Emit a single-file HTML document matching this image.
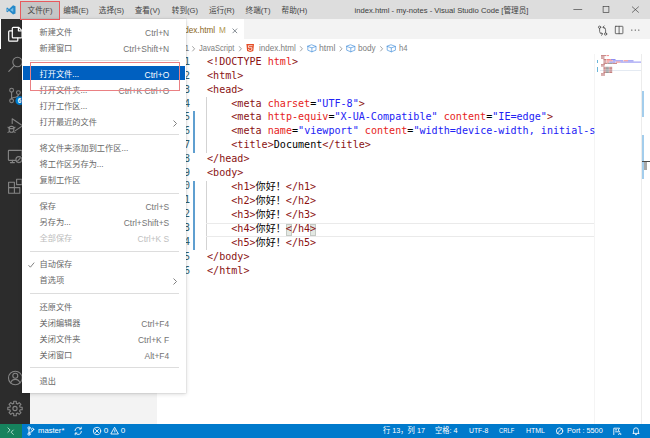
<!DOCTYPE html>
<html lang="zh-CN">
<head>
<meta charset="utf-8">
<title>index.html - my-notes - Visual Studio Code</title>
<style>
*{box-sizing:border-box;margin:0;padding:0}
html,body{width:650px;height:438px;overflow:hidden;background:#fff}
body{position:relative;font-family:"Liberation Sans","Noto Sans CJK SC",sans-serif;font-size:8.2px;color:#333;-webkit-font-smoothing:antialiased}
.abs{position:absolute}
/* title bar */
#titlebar{left:0;top:0;width:650px;height:18.5px;background:#dddddd}
.tm{position:absolute;top:1px;height:19px;line-height:19px;white-space:nowrap;color:#444;font-size:7.6px}
#filebtn{left:21px;top:1px;width:38px;height:18px;background:#c6c6c6}
#redbtn{z-index:12;left:20px;top:1px;width:40px;height:19px;border:1px solid #e8595d}
#title{left:341.5px;top:1px;width:200px;height:19px;line-height:19px;text-align:center;white-space:nowrap;font-size:7.65px;color:#3c3c3c}
/* activity bar */
#activity{left:0;top:18.5px;width:30px;height:405.5px;background:#2c2c2c}
#actind{left:0;top:19px;width:1px;height:30px;background:#fff}
/* sidebar */
#sidebar{left:30px;top:18.5px;width:127px;height:405.5px;background:#f3f3f3}
/* editor */
#tabs{left:157px;top:18.5px;width:493px;height:21px;background:#f3f3f3}
#tab{left:157px;top:18.5px;width:86.7px;height:21px;background:#fff}
#crumbs{left:157px;top:39px;width:493px;height:15px;background:#fff;color:#808080;font-size:8px}
.bc{position:absolute;top:0;height:15px;line-height:19px;white-space:nowrap;font-size:8.5px;transform-origin:0 50%}
#code{z-index:2;left:157px;top:54.5px;width:438.6px;height:370px;font-family:"DejaVu Sans Mono","Liberation Mono","Noto Sans CJK SC",monospace;font-size:10.08px;overflow:hidden}
.ln{position:absolute;left:0;height:14px;line-height:14px;width:438px;white-space:pre}
.ln .n{position:absolute;left:0;width:33px;text-align:right;color:#2f5f70}
.ln .c{position:absolute;left:50px;color:#000}
.t{color:#8a1212}.a{color:#e62222}.s{color:#2222f5}
.cj{font-family:"Noto Sans CJK SC",sans-serif}
/* status */
#status{left:0;top:424px;width:650px;height:14px;background:#007acc;color:#fff;font-size:7.6px}
#remote{left:0;top:424px;width:22px;height:14px;background:#16825d}
.st{position:absolute;top:424px;height:14px;line-height:14px;color:#fff;white-space:nowrap;font-size:8.1px;transform-origin:0 50%}
/* menu */
#menu{z-index:10;left:22px;top:19px;width:164px;height:374px;background:#fff;box-shadow:0 0 0 .6px rgba(0,0,0,.07),0 1px 4px rgba(0,0,0,.17);padding-top:5.7px;color:#686868}
.mi{position:relative;height:16px;line-height:16px;white-space:nowrap}
.mi .l{position:absolute;left:17.5px;top:0}
.mi .k{position:absolute;right:16.8px;top:0;font-size:8.45px;color:#747474}
.mi.sel .k{color:#fff}.mi.dis .k{color:#c0c0c0}
.mi.dis{color:#bcbcbc}
.sep{height:10.2px;position:relative}
.sep:after{content:"";position:absolute;left:8px;right:7px;top:3.6px;height:1px;background:#dddddd}
.mi.sel{color:#fff}
.mi.sel:before{content:"";position:absolute;left:1px;right:1.2px;top:-.7px;height:14px;background:#0060c0}
#redrect{z-index:11;left:30px;top:62px;width:150px;height:29px;border:1px solid #ea8083}
svg{position:absolute;overflow:visible}
</style>
</head>
<body>
<!-- TITLE BAR -->
<div id="titlebar" class="abs"></div>
<div id="filebtn" class="abs"></div>
<svg style="left:6.3px;top:4.5px" width="10" height="9.8" viewBox="0 0 100 100"><path d="M72 30L44 50L72 70Z" fill="#6cc0f2"/><path d="M71 2L96 13V87L71 98L30 60L12 74L4 69V31L12 26L30 40ZM72 30L44 50L72 70ZM13 40V60L24 50Z" fill="#2489ca" fill-rule="evenodd"/></svg>
<div class="tm" style="left:27.6px">文件(F)</div>
<div class="tm" style="left:63.2px">编辑(E)</div>
<div class="tm" style="left:98.8px">选择(S)</div>
<div class="tm" style="left:134.7px">查看(V)</div>
<div class="tm" style="left:171.8px">转到(G)</div>
<div class="tm" style="left:208.9px">运行(R)</div>
<div class="tm" style="left:245.6px">终端(T)</div>
<div class="tm" style="left:281.6px">帮助(H)</div>
<div id="title" class="abs">index.html - my-notes - Visual Studio Code [管理员]</div>
<svg style="left:570px;top:0" width="80" height="19" viewBox="0 0 80 19"><g stroke="#3a3a3a" stroke-width="0.65" fill="none"><path d="M3.4 9.5H12.2"/><rect x="33.1" y="6.6" width="5.8" height="5.8"/><path d="M62 6.6L68.8 12.6M68.8 6.6L62 12.6"/></g></svg>
<div id="redbtn" class="abs"></div>

<!-- ACTIVITY BAR -->
<div id="activity" class="abs"></div>
<div id="actind" class="abs"></div>


<svg style="left:0;top:19px" width="30" height="405" viewBox="0 19 30 405" fill="none" stroke-linejoin="round" stroke-linecap="round">
 <!-- files (active) -->
 <g stroke="#fff" stroke-width="1.2">
  <path d="M12.3 37V28.2Q12.3 27.3 13.2 27.3H18.6L22 30.6V37Q22 37.9 21.1 37.9H13.2Q12.3 37.9 12.3 37Z"/>
  <path d="M18.4 27.5V30.8H21.8"/>
  <path d="M12.3 30.9H9.6Q8.7 30.9 8.7 31.8V40.3Q8.7 41.2 9.6 41.2H16.9Q17.8 41.2 17.8 40.3V38"/>
 </g>
 <g stroke="#858585" stroke-width="1.1">
  <!-- search -->
  <circle cx="17.5" cy="62" r="4.7"/>
  <path d="M14.3 65.6L8.8 71.4"/>
  <!-- scm -->
  <circle cx="11.6" cy="90.2" r="1.9"/>
  <circle cx="11.6" cy="100.8" r="1.9"/>
  <circle cx="18.4" cy="92.6" r="1.9"/>
  <path d="M11.6 92.2V98.8M18.4 94.6Q18.4 97 15.5 97.2Q11.8 97.4 11.6 98.8"/>
  <!-- debug -->
  <path d="M12.2 123.4V118.8L22.6 125.8L15.4 130.6"/>
  <rect x="9.2" y="126.4" width="4.6" height="5.8" rx="2"/>
  <path d="M9.2 128.6H13.8M8 127.2l1.2.8M15 127.2l-1.2.8M8 132.4l1.2-.8M15 132.4l-1.2-.8"/>
  <!-- remote explorer -->
  <path d="M15.6 160.4H9Q8.4 160.4 8.4 159.8V151Q8.4 150.4 9 150.4H21.4Q22 150.4 22 151V155.4"/>
  <path d="M10.4 162.6H14.4M12.4 160.4V162.6"/>
  <circle cx="18.9" cy="159.6" r="3"/>
  <path d="M17.7 160.8L20.1 158.4"/>
  <!-- extensions -->
  <path d="M8.6 182.2H14.4V193.2H8.6ZM8.6 187.6H19.8V193.2H14.4"/>
  <rect x="16.6" y="179.2" width="5.4" height="5.4"/>
  <!-- account -->
  <circle cx="15.3" cy="378" r="6.8"/>
  <circle cx="15.3" cy="375.8" r="2.5"/>
  <path d="M10.7 382.8Q11.7 379.4 15.3 379.4Q18.9 379.4 19.9 382.8"/>
  <!-- gear -->
  <circle cx="15" cy="408.5" r="2.1"/>
  <path d="M13.74 401.31L16.26 401.31L16.32 403.37L17.70 403.94L19.20 402.53L20.97 404.30L19.56 405.80L20.13 407.18L22.19 407.24L22.19 409.76L20.13 409.82L19.56 411.20L20.97 412.70L19.20 414.47L17.70 413.06L16.32 413.63L16.26 415.69L13.74 415.69L13.68 413.63L12.30 413.06L10.80 414.47L9.03 412.70L10.44 411.20L9.87 409.82L7.81 409.76L7.81 407.24L9.87 407.18L10.44 405.80L9.03 404.30L10.80 402.53L12.30 403.94L13.68 403.37Z"/>
 </g>
 <circle cx="19.8" cy="100.7" r="4.4" fill="#007acc"/>
</svg>
<div class="abs" style="left:17.8px;top:96.2px;font-size:6.5px;font-weight:bold;color:#fff;line-height:9px">6</div>

<!-- SIDEBAR -->
<div id="sidebar" class="abs"></div>

<!-- EDITOR -->
<div id="tabs" class="abs"></div>
<div id="tab" class="abs"></div>
<div class="abs" style="left:177.8px;top:19px;height:20px;line-height:23px;font-size:8.2px;color:#8a661c;white-space:nowrap">index.html</div>
<div class="abs" style="left:219px;top:19px;height:20px;line-height:23px;font-size:8.2px;color:#b09650">M</div>
<svg style="left:232px;top:27.8px" width="5.7" height="5.7" viewBox="0 0 8 8"><path d="M.8 .8L7.2 7.2M7.2 .8L.8 7.2" stroke="#56606a" stroke-width="1" fill="none"/></svg>
<div id="crumbs" class="abs">
 <span class="bc" style="left:27.6px">1</span><span class="bc" style="left:42px;transform:scaleX(.89)">JavaScript</span>
 <span class="bc" style="left:102.4px;transform:scaleX(.951)">index.html</span>
 <span class="bc" style="left:161.7px;transform:scaleX(1.02)">html</span>
 <span class="bc" style="left:201px;transform:scaleX(.957)">body</span>
 <span class="bc" style="left:241.7px;transform:scaleX(.9)">h4</span>
</div>


<svg style="left:157px;top:39px" width="493" height="15" viewBox="157 39 493 15" fill="none" stroke="#8a8a8a" stroke-width="0.8" stroke-linecap="round" stroke-linejoin="round">
 <path d="M192.6 46.6L194.6 48.8L192.6 51M239.4 46.6L241.4 48.8L239.4 51M300.4 46.6L302.4 48.8L300.4 51M340 46.6L342 48.8L340 51M380.6 46.6L382.6 48.8L380.6 51"/>
 <g stroke="#4a94dc" stroke-width="0.7">
  <path d="M311.9 44.9L316.0 46.4L311.9 47.9L307.8 46.4ZM307.8 46.4V50.2L311.9 51.8L316.0 50.2V46.4M311.9 47.9V51.8"/>
  <path d="M350.8 44.9L354.9 46.4L350.8 47.9L346.7 46.4ZM346.7 46.4V50.2L350.8 51.8L354.9 50.2V46.4M350.8 47.9V51.8"/>
  <path d="M391.3 44.9L395.4 46.4L391.3 47.9L387.2 46.4ZM387.2 46.4V50.2L391.3 51.8L395.4 50.2V46.4M391.3 47.9V51.8"/>
 </g>
 <path d="M246.4 44H254L253.3 51L250.2 52.1L247.1 51Z" fill="#e44d26" stroke="none"/>
 <path d="M252.2 45.7H248.4L248.6 47.7H252L251.7 50.1L250.2 50.6L248.7 50.1L248.6 49.4" stroke="#fff" stroke-width="0.75" fill="none"/>
</svg>
<svg style="left:590px;top:19px" width="60" height="20" viewBox="590 19 60 20" fill="none" stroke="#4a4a4a" stroke-width="0.8" stroke-linecap="round" stroke-linejoin="round">
 <circle cx="599.6" cy="27.2" r="1.15"/><circle cx="605.6" cy="34" r="1.15"/>
 <path d="M599.6 28.4V31.4Q599.6 34 602.2 34M605.6 32.8V29.8Q605.6 27.2 603.2 27.2"/>
 <path d="M601.4 32.7L602.7 34L601.4 35.3M604.2 25.9L602.9 27.2L604.2 28.5"/>
 <rect x="615.3" y="26.3" width="7.6" height="7.4" rx="0.5"/><path d="M619.1 26.3V33.7"/>
 <g fill="#4a4a4a" stroke="none"><circle cx="631.8" cy="30.1" r="0.7"/><circle cx="635.3" cy="30.1" r="0.7"/><circle cx="638.8" cy="30.1" r="0.7"/></g>
</svg>

<div id="code" class="abs">
<div class="ln" style="top:0px"><span class="n">1</span><span class="c"><span class="t">&lt;!DOCTYPE</span> <span class="a">html</span><span class="t">&gt;</span></span></div>
<div class="ln" style="top:14px"><span class="n">2</span><span class="c"><span class="t">&lt;html&gt;</span></span></div>
<div class="ln" style="top:28px"><span class="n">3</span><span class="c"><span class="t">&lt;head&gt;</span></span></div>
<div class="ln" style="top:42px"><span class="n">4</span><span class="c">    <span class="t">&lt;meta</span> <span class="a">charset</span>=<span class="s">"UTF-8"</span><span class="t">&gt;</span></span></div>
<div class="ln" style="top:55px"><span class="n">5</span><span class="c">    <span class="t">&lt;meta</span> <span class="a">http-equiv</span>=<span class="s">"X-UA-Compatible"</span> <span class="a">content</span>=<span class="s">"IE=edge"</span><span class="t">&gt;</span></span></div>
<div class="ln" style="top:69px"><span class="n">6</span><span class="c">    <span class="t">&lt;meta</span> <span class="a">name</span>=<span class="s">"viewport"</span> <span class="a">content</span>=<span class="s">"width=device-width, initial-scale=1.0"</span><span class="t">&gt;</span></span></div>
<div class="ln" style="top:83px"><span class="n">7</span><span class="c">    <span class="t">&lt;title&gt;</span>Document<span class="t">&lt;/title&gt;</span></span></div>
<div class="ln" style="top:97px"><span class="n">8</span><span class="c"><span class="t">&lt;/head&gt;</span></span></div>
<div class="ln" style="top:111px"><span class="n">9</span><span class="c"><span class="t">&lt;body&gt;</span></span></div>
<div class="ln" style="top:124px"><span class="n">10</span><span class="c">    <span class="t">&lt;h1&gt;</span><span class="cj">你好！</span><span class="t">&lt;/h1&gt;</span></span></div>
<div class="ln" style="top:138px"><span class="n">11</span><span class="c">    <span class="t">&lt;h2&gt;</span><span class="cj">你好！</span><span class="t">&lt;/h2&gt;</span></span></div>
<div class="ln" style="top:152px"><span class="n">12</span><span class="c">    <span class="t">&lt;h3&gt;</span><span class="cj">你好！</span><span class="t">&lt;/h3&gt;</span></span></div>
<div class="ln" style="top:166px"><span class="n">13</span><span class="c">    <span class="t">&lt;h4&gt;</span><span class="cj">你好！</span><span class="t">&lt;/h4&gt;</span></span></div>
<div class="ln" style="top:180px"><span class="n">14</span><span class="c">    <span class="t">&lt;h5&gt;</span><span class="cj">你好！</span><span class="t">&lt;/h5&gt;</span></span></div>
<div class="ln" style="top:195px"><span class="n">15</span><span class="c"><span class="t">&lt;/body&gt;</span></span></div>
<div class="ln" style="top:209px"><span class="n">16</span><span class="c"><span class="t">&lt;/html&gt;</span></span></div>
</div>


<!-- editor decorations -->
<div class="abs" style="left:193px;top:111px;width:1.5px;height:42px;background:#5f9fd0"></div>
<div class="abs" style="left:193px;top:180.8px;width:1.5px;height:69.5px;background:#5f9fd0"></div>
<div class="abs" style="left:206px;top:97.3px;width:1px;height:55.7px;background:#d3d3d3"></div>
<div class="abs" style="left:206px;top:180.8px;width:1px;height:69.5px;background:#d3d3d3"></div>
<div class="abs" style="left:206px;top:222.5px;width:389px;height:14px;border-top:1px solid #eaeaea;border-bottom:1px solid #eaeaea"></div>
<div class="abs" style="left:285.5px;top:223.5px;width:6px;height:12px;background:#e3e8e3;border:.5px solid #c4c9c4"></div>
<div class="abs" style="left:310px;top:223.5px;width:6px;height:12px;background:#e3e8e3;border:.5px solid #c4c9c4"></div>
<!-- minimap -->
<div class="abs" style="left:594px;top:54px;width:1px;height:370px;background:#f4f4f4"></div>
<div class="abs" style="left:640.5px;top:54px;width:1px;height:370px;background:#ececec"></div>
<div class="abs" style="left:596.5px;top:59.8px;width:1.2px;height:3.6px;background:#6bb5d8"></div>
<div class="abs" style="left:596.5px;top:66.8px;width:1.2px;height:5.6px;background:#6bb5d8"></div>
<div class="abs" style="left:600px;top:69.6px;width:40.5px;height:1.6px;background:#e4eaf2"></div>
<svg style="left:600.5px;top:54.5px" width="40" height="21" viewBox="0 0 40 20.8" id="mm"><rect x="0.0" y="0.00" width="5.0" height="1" fill="#a03030" opacity="0.62"/><rect x="5.5" y="0.00" width="2.5" height="1" fill="#e84040" opacity="0.62"/><rect x="0.0" y="1.30" width="3.5" height="1" fill="#a03030" opacity="0.62"/><rect x="0.0" y="2.60" width="3.5" height="1" fill="#a03030" opacity="0.62"/><rect x="2.4" y="3.90" width="3.0" height="1" fill="#a03030" opacity="0.62"/><rect x="5.8" y="3.90" width="4.0" height="1" fill="#e84040" opacity="0.62"/><rect x="10.0" y="3.90" width="4.5" height="1" fill="#4848e8" opacity="0.62"/><rect x="2.4" y="5.20" width="3.0" height="1" fill="#a03030" opacity="0.62"/><rect x="5.8" y="5.20" width="6.0" height="1" fill="#e84040" opacity="0.62"/><rect x="12.0" y="5.20" width="10.0" height="1" fill="#4848e8" opacity="0.62"/><rect x="22.5" y="5.20" width="4.5" height="1" fill="#e84040" opacity="0.62"/><rect x="27.0" y="5.20" width="5.5" height="1" fill="#4848e8" opacity="0.62"/><rect x="2.4" y="6.50" width="3.0" height="1" fill="#a03030" opacity="0.62"/><rect x="5.8" y="6.50" width="2.5" height="1" fill="#e84040" opacity="0.62"/><rect x="8.5" y="6.50" width="6.0" height="1" fill="#4848e8" opacity="0.62"/><rect x="15.0" y="6.50" width="4.5" height="1" fill="#e84040" opacity="0.62"/><rect x="19.5" y="6.50" width="20.5" height="1" fill="#4848e8" opacity="0.62"/><rect x="2.4" y="7.80" width="4.0" height="1" fill="#a03030" opacity="0.62"/><rect x="6.5" y="7.80" width="5.0" height="1" fill="#555" opacity="0.62"/><rect x="11.5" y="7.80" width="4.5" height="1" fill="#a03030" opacity="0.62"/><rect x="0.0" y="9.10" width="4.0" height="1" fill="#a03030" opacity="0.62"/><rect x="0.0" y="10.40" width="3.5" height="1" fill="#a03030" opacity="0.62"/><rect x="2.4" y="11.70" width="2.4" height="1" fill="#a03030" opacity="0.62"/><rect x="4.9" y="11.70" width="3.0" height="1" fill="#555" opacity="0.62"/><rect x="8.2" y="11.70" width="3.0" height="1" fill="#a03030" opacity="0.62"/><rect x="2.4" y="13.00" width="2.4" height="1" fill="#a03030" opacity="0.62"/><rect x="4.9" y="13.00" width="3.0" height="1" fill="#555" opacity="0.62"/><rect x="8.2" y="13.00" width="3.0" height="1" fill="#a03030" opacity="0.62"/><rect x="2.4" y="14.30" width="2.4" height="1" fill="#a03030" opacity="0.62"/><rect x="4.9" y="14.30" width="3.0" height="1" fill="#555" opacity="0.62"/><rect x="8.2" y="14.30" width="3.0" height="1" fill="#a03030" opacity="0.62"/><rect x="2.4" y="15.60" width="2.4" height="1" fill="#a03030" opacity="0.62"/><rect x="4.9" y="15.60" width="3.0" height="1" fill="#555" opacity="0.62"/><rect x="8.2" y="15.60" width="3.0" height="1" fill="#a03030" opacity="0.62"/><rect x="2.4" y="16.90" width="2.4" height="1" fill="#a03030" opacity="0.62"/><rect x="4.9" y="16.90" width="3.0" height="1" fill="#555" opacity="0.62"/><rect x="8.2" y="16.90" width="3.0" height="1" fill="#a03030" opacity="0.62"/><rect x="0.0" y="18.20" width="4.0" height="1" fill="#a03030" opacity="0.62"/><rect x="0.0" y="19.50" width="4.0" height="1" fill="#a03030" opacity="0.62"/></svg>
<!-- overview ruler -->
<div class="abs" style="left:641.8px;top:90.5px;width:2.2px;height:26px;background:#a3cdec"></div>
<div class="abs" style="left:641.8px;top:135px;width:2.2px;height:44px;background:#a3cdec"></div>
<div class="abs" style="left:644.2px;top:162.4px;width:3.2px;height:7.6px;background:#a8a8a8"></div>
<div class="abs" style="left:641.6px;top:160.8px;width:8.4px;height:1.2px;background:#4a4a4a"></div>

<!-- STATUS BAR -->
<div id="status" class="abs"></div>
<div id="remote" class="abs"></div>
<div class="st" style="left:37.6px;transform:scaleX(0.946)">master*</div>
<div class="st" style="left:103.8px">0</div>
<div class="st" style="left:120.8px">0</div>
<div class="st" style="left:382.5px;transform:scaleX(0.897)">行 13，列 17</div>
<div class="st" style="left:435.3px;transform:scaleX(0.897)">空格: 4</div>
<div class="st" style="left:468.7px;transform:scaleX(0.843)">UTF-8</div>
<div class="st" style="left:499.4px;transform:scaleX(0.72)">CRLF</div>
<div class="st" style="left:525.7px;transform:scaleX(0.859)">HTML</div>
<div class="st" style="left:566.8px;transform:scaleX(0.902)">Port : 5500</div>


<svg style="left:0;top:424px" width="650" height="14" viewBox="0 424 650 14" fill="none" stroke="#fff" stroke-width="0.85" stroke-linecap="round" stroke-linejoin="round">
 <!-- remote -->
 <path d="M7.9 427.9L10.1 430.1L7.9 432.3M13.3 430L11.1 432.2L13.3 434.4" stroke-width="0.8" stroke="#d4f5e6"/>
 <!-- branch -->
 <circle cx="29" cy="427.9" r="1.15"/><circle cx="29" cy="434.1" r="1.15"/><circle cx="32.6" cy="429.4" r="1.15"/>
 <path d="M29 429.1V432.9M32.6 430.6Q32.6 432 30.8 432.1Q29.2 432.2 29 432.9"/>
 <!-- sync -->
 <path d="M75 430.6A3.2 3.2 0 0 1 80.6 428.6M81.4 431.4A3.2 3.2 0 0 1 75.8 433.4"/>
 <path d="M81.2 427.2V429H79.4M75.2 434.8V433H77"/>
 <!-- error -->
 <circle cx="97" cy="431" r="3.7"/><path d="M95.4 429.4L98.6 432.6M98.6 429.4L95.4 432.6"/>
 <!-- warning -->
 <path d="M114.8 427.6L118.4 434H111.2Z"/><path d="M114.8 429.8V432"/>
 <!-- port -->
 <circle cx="559.6" cy="431" r="3.2"/><path d="M557.4 433.2L561.8 428.8"/>
 <!-- feedback -->
 <path d="M613.8 434.6V428.2H619.6L618.2 430L619.6 431.8H615.6"/><circle cx="616" cy="429.9" r="0.2"/>
 <path d="M618.6 434.6Q618.6 433 620.2 433Q620.8 433 620.8 434.6"/>
 <!-- bell -->
 <path d="M633 433.4H639M633.6 433.4V430.4Q633.6 427.8 636 427.8Q638.4 427.8 638.4 430.4V433.4M635.4 434.6H636.6"/>
</svg>

<!-- MENU -->
<div id="menu" class="abs">
 <div class="mi"><span class="l">新建文件</span><span class="k">Ctrl+N</span></div>
 <div class="mi"><span class="l">新建窗口</span><span class="k">Ctrl+Shift+N</span></div>
 <div class="sep"></div>
 <div class="mi sel"><span class="l">打开文件...</span><span class="k">Ctrl+O</span></div>
 <div class="mi"><span class="l">打开文件夹...</span><span class="k">Ctrl+K Ctrl+O</span></div>
 <div class="mi"><span class="l">打开工作区...</span></div>
 <div class="mi"><span class="l">打开最近的文件</span><svg style="right:9.4px;top:4.8px" width="4" height="7" viewBox="0 0 4 7"><path d="M.5 .5L3.5 3.5L.5 6.5" fill="none" stroke="#616161" stroke-width="0.8"/></svg></div>
 <div class="sep"></div>
 <div class="mi"><span class="l">将文件夹添加到工作区...</span></div>
 <div class="mi"><span class="l">将工作区另存为...</span></div>
 <div class="mi"><span class="l">复制工作区</span></div>
 <div class="sep"></div>
 <div class="mi"><span class="l">保存</span><span class="k">Ctrl+S</span></div>
 <div class="mi"><span class="l">另存为...</span><span class="k">Ctrl+Shift+S</span></div>
 <div class="mi dis"><span class="l">全部保存</span><span class="k">Ctrl+K S</span></div>
 <div class="sep"></div>
 <div class="mi"><svg style="left:5.8px;top:4.6px" width="7" height="6" viewBox="0 0 7 6"><path d="M.5 3.2L2.4 5.2L6.2 .6" fill="none" stroke="#616161" stroke-width="0.8"/></svg><span class="l">自动保存</span></div>
 <div class="mi"><span class="l">首选项</span><svg style="right:9.4px;top:4.8px" width="4" height="7" viewBox="0 0 4 7"><path d="M.5 .5L3.5 3.5L.5 6.5" fill="none" stroke="#616161" stroke-width="0.8"/></svg></div>
 <div class="sep"></div>
 <div class="mi"><span class="l">还原文件</span></div>
 <div class="mi"><span class="l">关闭编辑器</span><span class="k">Ctrl+F4</span></div>
 <div class="mi"><span class="l">关闭文件夹</span><span class="k">Ctrl+K F</span></div>
 <div class="mi"><span class="l">关闭窗口</span><span class="k">Alt+F4</span></div>
 <div class="sep"></div>
 <div class="mi"><span class="l">退出</span></div>
</div>
<div id="redrect" class="abs"></div>
</body>
</html>
